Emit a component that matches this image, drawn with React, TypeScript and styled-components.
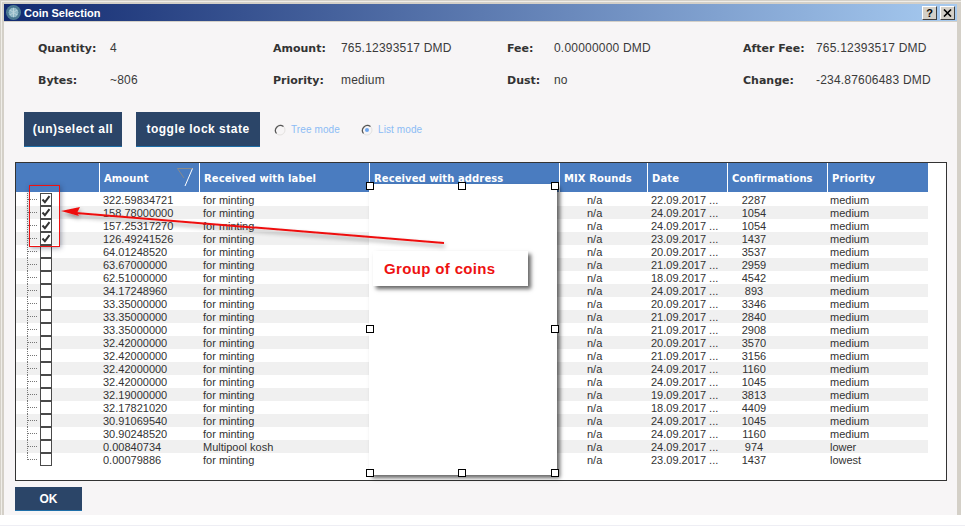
import React from 'react'
import styled, { createGlobalStyle } from 'styled-components'

const GlobalStyle = createGlobalStyle`
  html, body {
    margin: 0;
    padding: 0;
    background: #ffffff;
  }
  * {
    box-sizing: border-box;
  }
  body {
    font-family: 'Liberation Sans', Arial, sans-serif;
    font-size: 11px;
    color: #333333;
  }
`

const Desktop = styled.div`
  width: 965px;
  height: 526px;
  background: #ffffff;
  border-bottom: 1px solid #eeeef4;
  overflow: hidden;
`

const Window = styled.div`
  position: relative;
  width: 961px;
  height: 515px;
  background: #d4d0c8;
  padding: 4px 4px 0 4px;
  display: flex;
  flex-direction: column;
  box-shadow: inset 1px 1px 0 #d4d0c8, inset 2px 2px 0 #efede8;
`

const TitleBar = styled.div`
  height: 17px;
  flex: none;
  display: flex;
  align-items: center;
  padding: 0 2px 0 2px;
  background: linear-gradient(90deg, #122a70 0%, #a6caf0 100%);
`

const TitleText = styled.span`
  margin-left: 3px;
  font-family: 'Liberation Sans', sans-serif;
  font-size: 11px;
  font-weight: 700;
  color: #ffffff;
`

const TitleButtons = styled.div`
  margin-left: auto;
  display: flex;
  gap: 3px;
`

const TitleButton = styled.button`
  width: 15px;
  height: 14px;
  padding: 0;
  display: flex;
  align-items: center;
  justify-content: center;
  background: #d4d0c8;
  border: 1px solid;
  border-color: #ffffff #404040 #404040 #ffffff;
  font-family: 'Liberation Sans', sans-serif;
  font-size: 11px;
  font-weight: 700;
  color: #000000;
`

const Body = styled.div`
  flex: 1;
  margin-top: 1px;
  background: #f7f5f6;
  display: flex;
  flex-direction: column;
  padding: 0 11px;
`

const Summary = styled.div`
  display: grid;
  grid-template-columns: 235px 234px 236px 1fr;
  grid-auto-rows: 32px;
  margin-top: 10px;
  padding-left: 23px;
  height: 64px;
`

const Stat = styled.div`
  display: flex;
  align-items: center;
`

const StatLabel = styled.span<{ $width: number }>`
  width: ${(p) => p.$width}px;
  flex: none;
  font-family: 'DejaVu Sans', sans-serif;
  font-weight: 700;
  font-size: 11px;
  color: #333333;
`

const StatValue = styled.span`
  font-size: 12px;
  letter-spacing: 0.2px;
  color: #3a3a3a;
  white-space: nowrap;
`

const Actions = styled.div`
  display: flex;
  align-items: center;
  margin-top: 16px;
  padding-left: 9px;
`

const ActionButton = styled.button<{ $width: number }>`
  width: ${(p) => p.$width}px;
  height: 35px;
  padding: 0;
  margin-right: 14px;
  background: #2b4568;
  border: 0;
  border-bottom: 1px solid #1f6fa8;
  color: #ffffff;
  font-family: 'Liberation Sans', sans-serif;
  font-size: 12px;
  font-weight: 700;
  letter-spacing: 0.5px;
`

const RadioOption = styled.label<{ $width: number }>`
  width: ${(p) => p.$width}px;
  display: flex;
  align-items: center;
  gap: 5px;
  font-size: 10px;
  letter-spacing: 0.1px;
  color: #8cbcf5;
`

const RadioGroup = styled.div`
  display: flex;
`

const TableFrame = styled.div`
  position: relative;
  margin-top: 15px;
  width: 932px;
  height: 319px;
  background: #ffffff;
  border: 1px solid #333333;
`

const columns = '84px 100px 170px 190px 88px 80px 100px 100px'

const HeaderRow = styled.div`
  display: grid;
  grid-template-columns: ${columns};
  width: 912px;
  height: 29px;
  background: #4a7cc0;
`

const HeaderCell = styled.div`
  position: relative;
  display: flex;
  align-items: center;
  padding: 1px 0 0 4px;
  border-right: 1px solid #ffffff;
  font-family: 'DejaVu Sans', sans-serif;
  font-size: 10px;
  font-weight: 700;
  letter-spacing: 0.1px;
  color: #ffffff;
  white-space: nowrap;
  &:last-child {
    border-right: 0;
  }
`

const SortMark = styled.svg`
  position: absolute;
  right: 6px;
  top: 5px;
`

const Rows = styled.div`
  margin-top: 1px;
  width: 912px;
`

const Row = styled.div<{ $odd: boolean }>`
  display: grid;
  grid-template-columns: ${columns};
  height: 13px;
  line-height: 14px;
  background: ${(p) => (p.$odd ? '#f0f0f0' : '#ffffff')};
  font-size: 11px;
  color: #333333;
`

const TreeCell = styled.div`
  display: flex;
  padding-left: 10px;
`

const Check = styled.span`
  width: 12px;
  height: 13px;
  flex: none;
  display: flex;
  align-items: center;
  justify-content: center;
  background: #ffffff;
  border: 1px solid #4a4a4a;
`

const Cell = styled.div<{ $indent?: number }>`
  padding-left: ${(p) => p.$indent ?? 3}px;
  white-space: nowrap;
  overflow: hidden;
`

const CenteredCell = styled.div`
  width: 52px;
  text-align: center;
`

const OkRow = styled.div`
  margin-top: 6px;
`

const OkButton = styled.button`
  width: 67px;
  height: 24px;
  padding: 0;
  background: #2b4568;
  border: 0;
  border-bottom: 1px solid #1f6fa8;
  color: #ffffff;
  font-family: 'Liberation Sans', sans-serif;
  font-size: 12px;
  font-weight: 700;
`

const Overlay = styled.svg`
  position: absolute;
  left: 0;
  top: 0;
  pointer-events: none;
`

const SelectionBox = styled.div`
  position: absolute;
  left: 29px;
  top: 185px;
  width: 31px;
  height: 62px;
  border: 1px solid #ee1111;
  box-shadow: 1px 1px 5px rgba(30, 40, 70, 0.45);
`

const BlankPanel = styled.div`
  position: absolute;
  left: 369px;
  top: 184px;
  width: 188px;
  height: 291px;
  background: #ffffff;
  box-shadow: 3px 3px 4px rgba(0, 0, 0, 0.6);
`

const Handle = styled.span<{ $x: number; $y: number }>`
  position: absolute;
  left: ${(p) => p.$x}px;
  top: ${(p) => p.$y}px;
  width: 8px;
  height: 8px;
  background: #ffffff;
  border: 1px solid #000000;
`

const CalloutBox = styled.div`
  position: absolute;
  left: 373px;
  top: 251px;
  width: 155px;
  height: 35px;
  padding-left: 11px;
  display: flex;
  align-items: center;
  background: #ffffff;
  box-shadow: 3px 3px 4px rgba(0, 0, 0, 0.6);
  font-family: 'Liberation Sans', sans-serif;
  font-size: 15px;
  font-weight: 700;
  letter-spacing: 0.35px;
  color: #ee1111;
`

type Coin = [string, string, string, string, string]

const coins: Coin[] = [
  ['322.59834721', 'for minting', '22.09.2017 ...', '2287', 'medium'],
  ['158.78000000', 'for minting', '24.09.2017 ...', '1054', 'medium'],
  ['157.25317270', 'for minting', '24.09.2017 ...', '1054', 'medium'],
  ['126.49241526', 'for minting', '23.09.2017 ...', '1437', 'medium'],
  ['64.01248520', 'for minting', '20.09.2017 ...', '3537', 'medium'],
  ['63.67000000', 'for minting', '21.09.2017 ...', '2959', 'medium'],
  ['62.51000000', 'for minting', '18.09.2017 ...', '4542', 'medium'],
  ['34.17248960', 'for minting', '24.09.2017 ...', '893', 'medium'],
  ['33.35000000', 'for minting', '20.09.2017 ...', '3346', 'medium'],
  ['33.35000000', 'for minting', '21.09.2017 ...', '2840', 'medium'],
  ['33.35000000', 'for minting', '21.09.2017 ...', '2908', 'medium'],
  ['32.42000000', 'for minting', '20.09.2017 ...', '3570', 'medium'],
  ['32.42000000', 'for minting', '21.09.2017 ...', '3156', 'medium'],
  ['32.42000000', 'for minting', '24.09.2017 ...', '1160', 'medium'],
  ['32.42000000', 'for minting', '24.09.2017 ...', '1045', 'medium'],
  ['32.19000000', 'for minting', '19.09.2017 ...', '3813', 'medium'],
  ['32.17821020', 'for minting', '18.09.2017 ...', '4409', 'medium'],
  ['30.91069540', 'for minting', '24.09.2017 ...', '1045', 'medium'],
  ['30.90248520', 'for minting', '24.09.2017 ...', '1160', 'medium'],
  ['0.00840734', 'Multipool kosh', '24.09.2017 ...', '974', 'lower'],
  ['0.00079886', 'for minting', '23.09.2017 ...', '1437', 'lowest'],
]

const stats = [
  ['Quantity:', '4', 72],
  ['Amount:', '765.12393517 DMD', 68],
  ['Fee:', '0.00000000 DMD', 47],
  ['After Fee:', '765.12393517 DMD', 73],
  ['Bytes:', '~806', 72],
  ['Priority:', 'medium', 68],
  ['Dust:', 'no', 47],
  ['Change:', '-234.87606483 DMD', 73],
] as const

const headers = [
  '',
  'Amount',
  'Received with label',
  'Received with address',
  'MIX Rounds',
  'Date',
  'Confirmations',
  'Priority',
]

const CoinIcon = () => (
  <svg width="15" height="15" viewBox="0 0 15 15">
    <circle cx="7.5" cy="7.5" r="7.5" fill="#4f7d94" />
    <circle cx="7.5" cy="7.5" r="5.5" fill="#8fb7c6" stroke="#3d6a86" />
    <path d="M4 5l7 5M11 5l-7 5M7.5 3v9" stroke="#b9d2da" strokeWidth="1" />
  </svg>
)

const RadioIcon = ({ on }: { on?: boolean }) => (
  <svg width="12" height="12" viewBox="0 0 12 12">
    <circle cx="6" cy="6" r="5" fill="#f7f5f6" stroke="#e4e2e0" />
    <path d="M2.5 9.5A5 5 0 0 1 9.5 2.5" fill="none" stroke="#555555" strokeWidth="1.2" />
    {on && <circle cx="6" cy="6" r="2" fill="#6ea6ee" />}
  </svg>
)

const TreeLine = ({ last }: { last: boolean }) => (
  <svg width="14" height="13" viewBox="0 0 14 13">
    <line x1="1.5" y1="0" x2="1.5" y2={last ? 7 : 13} stroke="#777777" strokeDasharray="1 1" />
    <line x1="2" y1="6.5" x2="12" y2="6.5" stroke="#777777" strokeDasharray="1 1" />
  </svg>
)

const CheckMark = () => (
  <svg width="10" height="11" viewBox="0 0 10 11">
    <path d="M1.5 5.5l2.4 2.6L8.5 2.2" fill="none" stroke="#333333" strokeWidth="2" />
  </svg>
)

const App = () => {
  return (
    <Desktop>
      <GlobalStyle />
      <Window>
        <TitleBar>
          <CoinIcon />
          <TitleText>Coin Selection</TitleText>
          <TitleButtons>
            <TitleButton>?</TitleButton>
            <TitleButton>
              <svg width="9" height="8" viewBox="0 0 9 8">
                <path d="M1 0.5l7 7M8 0.5l-7 7" stroke="#000000" strokeWidth="1.6" />
              </svg>
            </TitleButton>
          </TitleButtons>
        </TitleBar>
        <Body>
          <Summary>
            {stats.map(([label, value, width]) => (
              <Stat key={label}>
                <StatLabel $width={width}>{label}</StatLabel>
                <StatValue>{value}</StatValue>
              </Stat>
            ))}
          </Summary>
          <Actions>
            <ActionButton $width={98}>(un)select all</ActionButton>
            <ActionButton $width={124}>toggle lock state</ActionButton>
            <RadioGroup>
              <RadioOption $width={87}>
                <RadioIcon />
                Tree mode
              </RadioOption>
              <RadioOption $width={80}>
                <RadioIcon on />
                List mode
              </RadioOption>
            </RadioGroup>
          </Actions>
          <TableFrame>
            <HeaderRow>
              {headers.map((h, i) => (
                <HeaderCell key={i}>
                  {h}
                  {h === 'Amount' && (
                    <SortMark width="16" height="19" viewBox="0 0 16 19">
                      <path d="M0.5 0.5H15.5" stroke="#8a8a8a" fill="none" />
                      <path d="M0.5 0.5L7 10" stroke="#8a8a8a" fill="none" />
                      <path d="M15.5 0.5L8 18" stroke="#ffffff" fill="none" />
                    </SortMark>
                  )}
                </HeaderCell>
              ))}
            </HeaderRow>
            <Rows>
              {coins.map((c, i) => (
                <Row key={i} $odd={i % 2 === 1}>
                  <TreeCell>
                    <TreeLine last={i === coins.length - 1} />
                    <Check>{i < 4 && <CheckMark />}</Check>
                  </TreeCell>
                  <Cell>{c[0]}</Cell>
                  <Cell>{c[1]}</Cell>
                  <Cell />
                  <Cell $indent={27}>n/a</Cell>
                  <Cell>{c[2]}</Cell>
                  <CenteredCell>{c[3]}</CenteredCell>
                  <Cell $indent={2}>{c[4]}</Cell>
                </Row>
              ))}
            </Rows>
          </TableFrame>
          <OkRow>
            <OkButton>OK</OkButton>
          </OkRow>
        </Body>
        <SelectionBox />
        <BlankPanel>
          <Handle $x={-3} $y={-2} />
          <Handle $x={89} $y={-2} />
          <Handle $x={182} $y={-2} />
          <Handle $x={-3} $y={141} />
          <Handle $x={182} $y={141} />
          <Handle $x={-3} $y={285} />
          <Handle $x={89} $y={285} />
          <Handle $x={182} $y={285} />
        </BlankPanel>
        <CalloutBox>Group of coins</CalloutBox>
        <Overlay width="961" height="515" viewBox="0 0 961 515">
          <defs>
            <filter id="arrowShade" x="-5%" y="-50%" width="110%" height="200%">
              <feDropShadow dx="1" dy="3" stdDeviation="2" floodColor="#000000" floodOpacity="0.4" />
            </filter>
          </defs>
          <g filter="url(#arrowShade)">
            <path d="M444 243L76 213" stroke="#ee1111" strokeWidth="2" fill="none" />
            <path d="M61 211L80 207L77 213L79 216Z" fill="#ee1111" />
          </g>
        </Overlay>
      </Window>
    </Desktop>
  )
}

export default App
